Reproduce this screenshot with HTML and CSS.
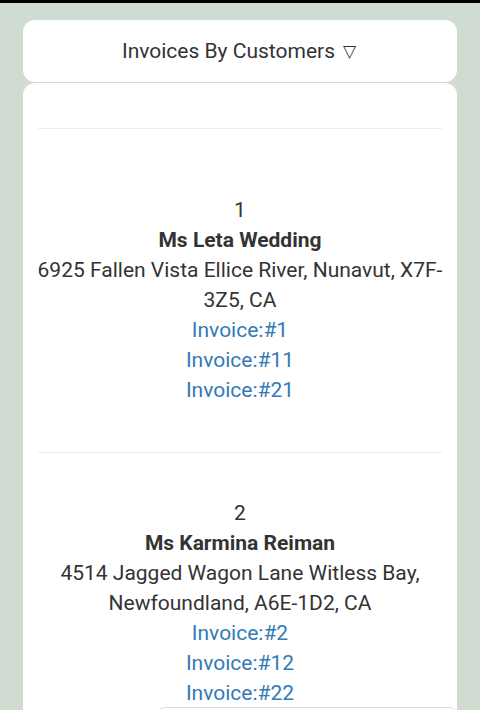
FILE: index.html
```html
<!DOCTYPE html>
<html>
<head>
<meta charset="utf-8">
<link rel="stylesheet" href="styles.css">
</head>
<body>
<div class="topbar"></div>
<div class="page">
  <div class="header-card">
    <span class="title">Invoices By Customers</span><span class="caret">▽</span>
  </div>
  <div class="main-card">
    <div class="head-row"></div>
    <div class="row first">
      <div>1</div>
      <div class="name">Ms Leta Wedding</div>
      <div class="address">6925 Fallen Vista Ellice River, Nunavut, X7F-3Z5, CA</div>
      <a href="#">Invoice:#1</a>
      <a href="#">Invoice:#11</a>
      <a href="#">Invoice:#21</a>
    </div>
    <div class="row">
      <div>2</div>
      <div class="name">Ms Karmina Reiman</div>
      <div class="address">4514 Jagged Wagon Lane Witless Bay, Newfoundland, A6E-1D2, CA</div>
      <a href="#">Invoice:#2</a>
      <a href="#">Invoice:#12</a>
      <a href="#">Invoice:#22</a>
    </div>
  </div>
</div>
<div class="floating"></div>
</body>
</html>
```
FILE: styles.css
```css
html, body {
  margin: 0;
  padding: 0;
}
body {
  background: #d0dbd2;
  font-family: Roboto, "Liberation Sans", sans-serif;
  color: #333;
  font-size: 21px;
  line-height: 30px;
  height: 710px;
  overflow: hidden;
}
.topbar {
  height: 3px;
  background: #000;
}
.page {
  padding: 17px 23px 0;
  display: flex;
  flex-direction: column;
  gap: 1px;
}
.header-card {
  background: #fff;
  border-radius: 12px;
  height: 62px;
  display: flex;
  align-items: center;
  justify-content: center;
  gap: 8px;
}
.title {
  margin-left: -2px;
}
.caret {
  font-size: 17px;
  font-family: "DejaVu Sans", sans-serif;
  line-height: 20px;
}
.main-card {
  background: #fff;
  border-radius: 12px 12px 0 0;
  padding: 0 15px;
  min-height: 700px;
}
.head-row {
  height: 45px;
  border-bottom: 1px solid #eceeed;
}
.row {
  display: flex;
  flex-direction: column;
  align-items: center;
  text-align: center;
  padding: 45px 0 47px;
  border-bottom: 1px solid #eceeed;
}
.row.first {
  padding-top: 66px;
}
.address {
  margin: 0 -4px;
}
.name {
  font-weight: bold;
}
a {
  color: #337ab7;
  text-decoration: none;
}
.floating {
  position: fixed;
  left: 157px;
  top: 707px;
  width: 298px;
  height: 40px;
  background: #fff;
  border: 1px solid #dcdcdc;
  border-radius: 8px;
}
```
